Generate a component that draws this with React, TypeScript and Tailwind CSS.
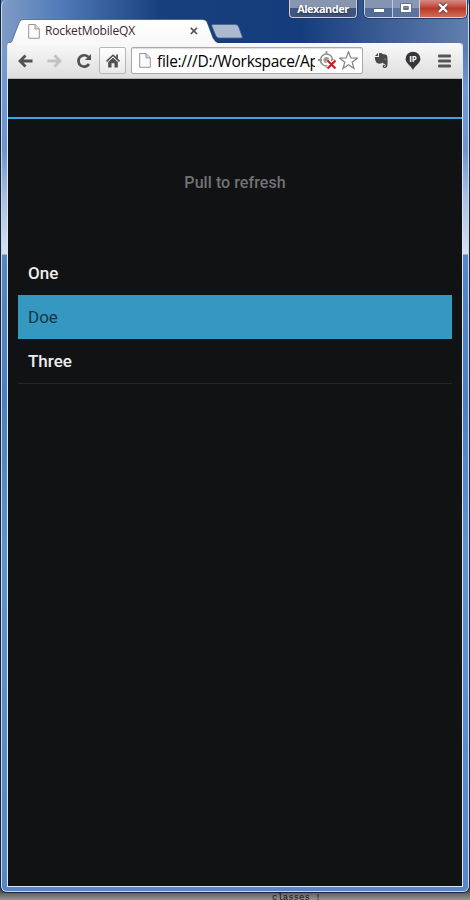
import React from 'react';

function PageIcon({ className = '' }: { className?: string }) {
  return (
    <svg width="12" height="15" viewBox="0 0 12 15" className={`shrink-0 ${className}`} fill="#fbfbfb" stroke="#969696">
      <path d="M.7.5h6.4l4.2 4.2v9.6H.7z" />
      <path d="M7 .7v4.2h4.2" fill="#ddd" />
    </svg>
  );
}

function WindowControls() {
  return (
    <div className="-mr-[4px] flex h-[18px] items-start">
      <div className="flex h-[18px] w-[68px] items-start justify-center rounded-b-[4px] border border-t-0 border-[#c5cfdf] bg-linear-to-b from-[#8795ae] from-50% to-[#40557d] to-50% font-['Open_Sans',sans-serif] text-[11px] leading-[17px] font-bold text-white shadow-[0_0_0_1px_#24385f] [text-shadow:0_1px_2px_#202b40]">
        <span className="tracking-[-0.5px]">Alexander</span>
      </div>
      <div className="ml-[7px] flex h-[18px] w-[103px] overflow-hidden rounded-b-[5px] border border-t-0 border-[#cdd5e2] shadow-[0_0_0_1px_#293d65]">
        <div className="flex w-[28px] justify-center border-r border-[#c1cada] bg-linear-to-b from-[#8494b2] from-50% to-[#526b97] to-50%">
          <svg width="14" height="17"><rect x="1.5" y="8.5" width="11" height="4" rx=".5" fill="#fff" stroke="#45546c" strokeWidth=".8" /></svg>
        </div>
        <div className="flex w-[27px] justify-center border-r border-[#d8cbd1] bg-linear-to-b from-[#8797b5] from-50% to-[#5d749e] to-50%">
          <svg width="14" height="17"><path d="M1.5 3.5h11v9h-11z M4.7 6.5v3h4.6v-3z" fill="#fff" fillRule="evenodd" stroke="#4b5a74" strokeWidth=".8" /></svg>
        </div>
        <div className="flex flex-1 justify-center bg-linear-to-b from-[#d48b84] via-[#ba3929] via-50% to-[#cf6d55]">
          <svg width="14" height="17"><path d="m3 4 8 8m0-8-8 8" stroke="#67434b" strokeWidth="4.2" /><path d="m3 4 8 8m0-8-8 8" stroke="#fff" strokeWidth="2.4" /></svg>
        </div>
      </div>
    </div>
  );
}

function TabStrip() {
  return (
    <div className="relative h-[24px]">
      <svg width="456" height="24" className="absolute inset-0">
        <defs>
          <linearGradient id="tab" x1="0" x2="0" y1="0" y2="1"><stop stopColor="#fff" /><stop offset="1" stopColor="#f8f8f8" /></linearGradient>
        </defs>
        <path d="M0 24.5c4-1 4-2 5-5L11 4Q12 .5 15 .5H194Q198 .5 199 3L205 19Q207 23 211 24.5Z" transform="translate(1 0)" fill="url(#tab)" stroke="#193869" strokeOpacity=".55" />
        <path d="M206 5.500h22.500q2 0 3 2l3.500 9.500q1 2-1 2h-22q-2 0-3-2l-4-9.500q-1-2 1-2z" fill="#adb9cf" stroke="#456493" strokeWidth=".8" />
      </svg>
      <div className="relative flex h-[24px] items-center pl-[21px]">
        <PageIcon />
        <span className="ml-[5px] w-[147px] font-['Open_Sans',sans-serif] text-[12px] leading-[24px] tracking-[-0.15px] text-[#3d2633]">RocketMobileQX</span>
        <svg width="8" height="8" className="-ml-[2px]" stroke="#555" strokeWidth="1.7"><path d="m.8.8 6.2 6.2m0-6.200L.8 7" /></svg>
      </div>
    </div>
  );
}

function Toolbar() {
  return (
    <div className="flex h-[36px] items-center rounded-tr-[3px] border-b border-[#b5b5b5] bg-linear-to-b from-[#f9f9f9] to-[#dedede]">
      <svg width="15" height="14" className="ml-[10px]" fill="none" stroke="#515151" strokeWidth="2.8"><path d="M14.500 7H2M7.500 1.500 2 7l5.500 5.500" /></svg>
      <svg width="15" height="14" className="ml-[14px]" fill="none" stroke="#c2c2c2" strokeWidth="2.8"><path d="M.5 7H13M7.500 1.500 13 7l-5.500 5.500" /></svg>
      <svg width="16" height="16" className="ml-[14px]" fill="none" stroke="#515151" strokeWidth="2.7"><path d="M12.300 4A5.700 5.700 0 1 0 13 11" /><path d="M15 1v6H9z" fill="#515151" stroke="none" /></svg>
      <div className="ml-[7px] flex h-[27px] w-[27px] items-center justify-center rounded-[2px] border border-[#b7b7b7] bg-linear-to-b from-white to-[#e8e8e8]">
        <svg width="14" height="15" viewBox="0 0 16 16" fill="#505050"><path d="M8 .8 0 8.400l1.200 1.300L8 3.200l6.800 6.500L16 8.400 13.600 6V1h-2v3.100z" /><path d="m2.500 9.800 5.500-5 5.500 5V16H9.700v-5H6.300v5H2.500z" /></svg>
      </div>
      <div className="ml-[5px] flex h-[27px] w-[232px] items-center rounded-[2px] border border-[#aaa] bg-white shadow-[inset_0_1px_1px_#ddd]">
        <PageIcon className="ml-[7px]" />
        <div className="ml-[6px] h-[25px] w-[158px] overflow-hidden font-['Open_Sans',sans-serif] text-[15.5px] leading-[26px] tracking-[-0.3px] whitespace-nowrap text-black">file:///D:/Workspace/Ap</div>
        <svg width="21" height="21" className="ml-[3px] shrink-0" fill="none">
          <circle cx="8.500" cy="10" r="6" stroke="#949494" strokeWidth="1.7" /><circle cx="8.500" cy="10" r="3" fill="#999" /><path d="M8.500 1v4m0 10v3M0 10h4m9 0h4" stroke="#949494" strokeWidth="1.8" />
          <path d="m9.500 10.500 8 8m0-8-8 8" stroke="#fff" strokeWidth="4" /><path d="m9.500 10.500 8 8m0-8-8 8" stroke="#d91420" strokeWidth="2.1" />
        </svg>
        <svg width="19" height="19" viewBox="0 0 18 18" className="shrink-0" fill="#fff" stroke="#858585" strokeWidth="1.2"><path d="m9 .8 2.200 5.800 6.100.2-4.800 3.800 1.700 6L9 13.100l-5.200 3.500 1.700-6L.7 6.800l6.100-.2z" /></svg>
      </div>
      <svg width="15" height="17" className="ml-[11px]" fill="#494949">
        <path d="m1 4 3-3v3z" /><path d="M5 1.200C7 .7 8 1.300 8.400 2l3 .6c1.500.4 1.800 1 2 3 .4 4 .3 8-.5 9.500-1 1.500-4 1.400-4.200-.7-.1-1.500 1.200-2 2.100-1.600v1.400c-1-.1-.9 1 .2.7.8-.3.6-2.800-.1-3-1-.3-2-.4-2.500-1.400-.4 1.500-4 1.400-5.500.4C1.500 9.800 1 7.500.8 5H5z" /><path d="M10.200 7q1.500-.8 1.800.7z" fill="#eee" />
      </svg>
      <div className="relative ml-[16px] h-[20px] w-[16px]">
        <svg width="16" height="20" className="absolute inset-0" fill="#363636"><path d="M8 .7a7.400 7.400 0 0 0-7.400 7.400C.6 12 5.500 14.500 8 19c2.500-4.500 7.400-7 7.400-10.900A7.400 7.400 0 0 0 8 .7z" /></svg>
        <span className="relative block text-center font-['Open_Sans',sans-serif] text-[8px] leading-[15px] font-bold text-white">IP</span>
      </div>
      <svg width="14" height="14" className="ml-[17px]" fill="#575757"><rect y=".5" width="13" height="3" rx="1" /><rect y="5.500" width="13" height="3" rx="1" /><rect y="10.500" width="13" height="3" rx="1" /></svg>
    </div>
  );
}

export default function App() {
  return (
    <div className="h-[900px] w-[470px] overflow-hidden bg-linear-to-b from-[#171d24] from-98% to-[#858585] to-100%">
      <div className="h-[893px] w-full rounded-b-[7px] border-x border-b border-[#172537] bg-[#568bc9]">
        <div className="h-full rounded-t-[6px] rounded-b-[6px] border-x border-b border-[#c4daf2] bg-[linear-gradient(90deg,#7f9bc5_0%,#527db9_12%,#173f7d_34%,#153c7c_64%,#617fae_100%)]">
          <div className="h-full rounded-b-[5px] bg-[linear-gradient(180deg,transparent_0px,transparent_50px,#6e98d6_88px,#6e94cf_150px,#a8bde0_195px,#d8e1ef_254px,#5785c5_255px,#4d7fc0_400px,#6092d0_550px,#5885c6_892px)] px-[5px] pb-[4px]">
            <div className="flex h-[19px] justify-end"><WindowControls /></div>
            <TabStrip />
            <div className="h-[844px] rounded-t-[3px] border-x border-b border-[#dbe7f3]">
              <Toolbar />
              <main className="h-[807px] bg-[#111214] font-[Roboto,sans-serif]">
                <header className="h-[40px] border-b-2 border-[#33a9df]" />
                <div className="flex h-[133px] items-center justify-center pb-[6px] text-[16px] font-medium tracking-[0.06px] text-[#717274]">Pull to refresh</div>
                <div className="mx-[10px] text-[17px] text-[#eeeeef]">
                  <div className="flex h-[43px] items-center pl-[10px] font-medium">One</div>
                  <div className="flex h-[44px] items-center bg-[#3498c0] pt-[2px] pl-[10px] text-[#173645]">Doe</div>
                  <div className="flex h-[45px] items-center border-b border-[#26272a] pt-[2px] pl-[10px] font-medium">Three</div>
                </div>
              </main>
            </div>
          </div>
        </div>
      </div>
      <div className="flex h-[7px] items-start overflow-hidden bg-linear-to-b from-[#606060] to-[#969696] pl-[272px] font-['Liberation_Mono',monospace] text-[9px] leading-[11px] text-[#111]"><span>classes !</span></div>
    </div>
  );
}
